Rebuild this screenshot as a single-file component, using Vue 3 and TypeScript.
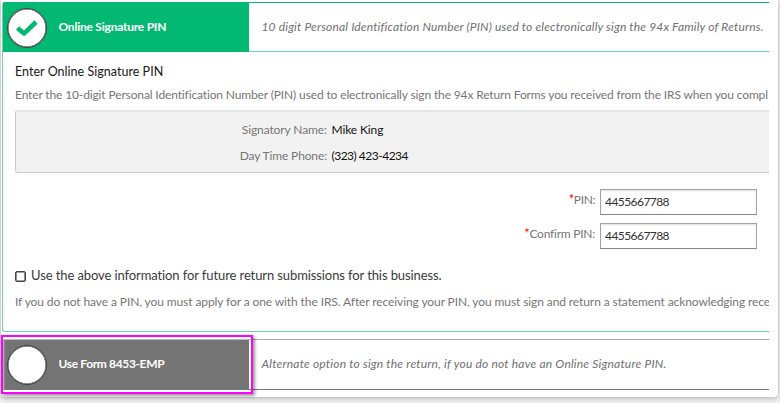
<script setup lang="ts">
import { ref } from 'vue'

interface Detail { label: string; value: string; cls: string }
interface PinField { id: string; label: string; cls: string }

const details: Detail[] = [
  { label: 'Signatory Name:', value: 'Mike King', cls: 'name' },
  { label: 'Day Time Phone:', value: '(323) 423-4234', cls: 'phone' },
]
const fields: PinField[] = [
  { id: 'pin', label: 'PIN:', cls: 'short' },
  { id: 'confirm', label: 'Confirm PIN:', cls: 'long' },
]
const pins = ref<Record<string, string>>({ pin: '4455667788', confirm: '4455667788' })
const remember = ref(false)
</script>

<template>
  <div class="page">
    <main class="modal">
      <div class="clip">
        <section class="card active">
          <header class="head">
            <div class="tab">
              <span class="dot">
                <svg width="24" height="20" viewBox="0 0 24 20"><path d="M2.5 10 L9 15.6 L21 4" fill="none" stroke="#03b872" stroke-width="4.6" stroke-linejoin="round" /></svg>
              </span>
              <span class="t-online">Online Signature PIN</span>
            </div>
            <p class="desc"><span class="t-desc1">10 digit Personal Identification Number (PIN) used to electronically sign the 94x Family of Returns.</span></p>
          </header>
          <div class="body">
            <h2><span class="t-title">Enter Online Signature PIN</span></h2>
            <p class="intro"><span class="t-intro">Enter the 10-digit Personal Identification Number (PIN) used to electronically sign the 94x Return Forms you received from the IRS when you compl</span></p>
            <div class="well">
              <div v-for="d in details" :key="d.cls" class="row">
                <span class="key"><span :class="'k-' + d.cls">{{ d.label }}</span></span>
                <span class="val" :class="'v-' + d.cls">{{ d.value }}</span>
              </div>
            </div>
            <div v-for="f in fields" :key="f.id" class="field">
              <label :for="f.id" :class="f.cls"><i>*</i>{{ f.label }}</label>
              <input :id="f.id" v-model="pins[f.id]" type="text" />
            </div>
            <label class="check">
              <input v-model="remember" type="checkbox" />
              <span class="t-check">Use the above information for future return submissions for this business.</span>
            </label>
            <p class="note"><span class="t-note">If you do not have a PIN, you must apply for a one with the IRS. After receiving your PIN, you must sign and return a statement acknowledging rece</span></p>
          </div>
        </section>
        <section class="card other">
          <header class="head">
            <div class="tab"><span class="dot"></span><span class="t-form">Use Form 8453-EMP</span></div>
            <p class="desc"><span class="t-desc2">Alternate option to sign the return, if you do not have an Online Signature PIN.</span></p>
          </header>
        </section>
      </div>
      <div class="highlight"></div>
    </main>
  </div>
</template>

<style>
body { overflow: hidden; }
</style>

<style scoped>
* { box-sizing: border-box; }
.page {
  width: 780px;
  height: 403px;
  padding-left: 1px;
  overflow: hidden;
  background: #efefef;
  font-family: Lato, "Liberation Sans", sans-serif;
  font-size: 12px;
  color: #767676;
  white-space: nowrap;
}
p, h2 { margin: 0; font-weight: 400; }
.modal {
  position: relative;
  width: 777px;
  height: 397px;
  padding: 2px 9px 0 1px;
  background: #fff;
  border-radius: 0 0 4px 4px;
  box-shadow: 0 1px 5px rgba(0, 0, 0, 0.28);
}
.clip { width: 767px; overflow: hidden; }
.card { width: 800px; }
.active {
  height: 330px;
  border: 1px solid #69d7a9;
  border-top-color: #03b872;
  border-radius: 3px;
}
.head { display: flex; height: 49px; border-bottom: 1px solid #69d7a9; }
.tab {
  display: flex;
  align-items: center;
  gap: 11.5px;
  width: 246px;
  height: 49px;
  padding-left: 4px;
  background: #03b872;
  color: #fff;
  font-weight: 700;
}
.tab > span:last-child { margin-top: -2px; }
.dot {
  display: flex;
  align-items: center;
  justify-content: center;
  flex: none;
  width: 40px;
  height: 40px;
  border: 1px solid #3e3e3e;
  border-radius: 50%;
  background: #fff;
  box-shadow: inset 0 0 0 0.5px #3e3e3e;
}
.desc { padding: 15px 0 0 12.5px; line-height: 17px; font-style: italic; color: #707070; }
.body { padding: 11px 0 0 12px; }
h2 { font-size: 12.5px; line-height: 18px; color: #171717; }
.intro { margin-top: 5px; line-height: 18px; }
.well {
  width: 790px;
  height: 63px;
  margin-top: 6px;
  padding-top: 8px;
  background: #f2f2f2;
  border: 1px solid #cacaca;
  border-top: 2px solid #e5e5e5;
  border-radius: 3px;
}
.row { display: flex; height: 26px; line-height: 20px; }
.key { width: 311px; text-align: right; }
.val { margin-left: 4.5px; color: #111; }
.field { display: flex; width: 742px; height: 26px; margin-top: 8px; justify-content: flex-end; }
.well + .field { margin-top: 16px; }
.field label { margin-right: 5px; line-height: 20px; }
.field i { color: #f00; font-style: normal; font-size: 13px; }
.field input {
  width: 157px;
  height: 26px;
  padding: 0 4px 2px;
  border: 1px solid #a2a5a7;
  border-bottom-color: #858889;
  border-radius: 0;
  box-shadow: inset 0 1px 2px #ddd;
  font: 12px Lato, sans-serif;
  letter-spacing: -0.56px;
  color: #333;
  outline: none;
}
.check { display: flex; align-items: center; height: 20px; margin-top: 16px; color: #3a3a3a; font-size: 13px; }
.check input {
  appearance: none;
  width: 11px;
  height: 11px;
  margin: 2px 5px 0 0;
  border: 1px solid #444;
  border-radius: 2px;
  background: #fff;
  box-shadow: inset 0 0 0 0.6px #444;
}
.note { margin-top: 8px; line-height: 18px; }
.other {
  height: 51px;
  margin-top: 7px;
  border: 1px solid #767676;
  border-top-color: #aaa;
}
.other .head { border: 0; }
.other .tab { background: #747474; }
.highlight {
  position: absolute;
  left: 0;
  top: 335px;
  width: 252px;
  height: 59px;
  border: 2px solid #f0f;
  box-shadow: 2px 2px 3px rgba(0, 0, 0, 0.4), inset 1px 2px 2px rgba(255, 255, 255, 0.55);
}
.t-online { letter-spacing: -0.23px; }
.t-form { letter-spacing: -0.36px; }
.t-desc1 { letter-spacing: 0.16px; }
.t-desc2 { letter-spacing: 0.2px; }
.t-title { letter-spacing: 0.03px; }
.t-intro { letter-spacing: -0.136px; }
.t-note { letter-spacing: -0.098px; }
.t-check { letter-spacing: -0.1px; }
.k-name { letter-spacing: -0.1px; }
.k-phone { letter-spacing: -0.14px; }
.v-name { letter-spacing: -0.12px; }
.v-phone { letter-spacing: -0.5px; }
.short { letter-spacing: -0.4px; }
.long { letter-spacing: -0.24px; }
</style>
